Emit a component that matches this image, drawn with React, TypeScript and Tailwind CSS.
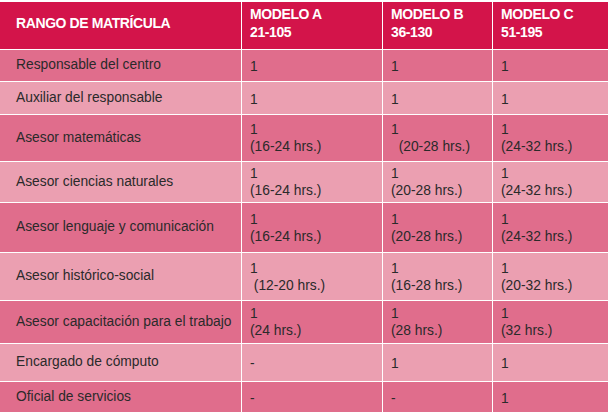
import React from "react";

type Row = { label: string; a: string[]; b: string[]; c: string[]; h: string; dark: boolean };

const NB = "\u00a0";

const rows: Row[] = [
  { label: "Responsable del centro", a: ["1"], b: ["1"], c: ["1"], h: "h-[31px]", dark: true },
  { label: "Auxiliar del responsable", a: ["1"], b: ["1"], c: ["1"], h: "h-[32px]", dark: false },
  { label: "Asesor matemáticas", a: ["1", "(16-24 hrs.)"], b: ["1", NB + NB + "(20-28 hrs.)"], c: ["1", "(24-32 hrs.)"], h: "h-[46px]", dark: true },
  { label: "Asesor ciencias naturales", a: ["1", "(16-24 hrs.)"], b: ["1", "(20-28 hrs.)"], c: ["1", "(24-32 hrs.)"], h: "h-[40px]", dark: false },
  { label: "Asesor lenguaje y comunicación", a: ["1", "(16-24 hrs.)"], b: ["1", "(20-28 hrs.)"], c: ["1", "(24-32 hrs.)"], h: "h-[49px]", dark: true },
  { label: "Asesor histórico-social", a: ["1", NB + "(12-20 hrs.)"], b: ["1", "(16-28 hrs.)"], c: ["1", "(20-32 hrs.)"], h: "h-[47px]", dark: false },
  { label: "Asesor capacitación para el trabajo", a: ["1", "(24 hrs.)"], b: ["1", "(28 hrs.)"], c: ["1", "(32 hrs.)"], h: "h-[42px]", dark: true },
  { label: "Encargado de cómputo", a: ["-"], b: ["1"], c: ["1"], h: "h-[37px]", dark: false },
  { label: "Oficial de servicios", a: ["-"], b: ["-"], c: ["1"], h: "h-[31px]", dark: true },
];

function Cell({ lines, bg }: { lines: string[]; bg: string }) {
  return (
    <div className={`${bg} flex flex-col justify-center pl-2 leading-[17px] whitespace-pre`}>
      {lines.map((l, i) => (
        <span key={i} className={lines.length === 1 ? "pt-[2px]" : ""}>{l}</span>
      ))}
    </div>
  );
}

export default function App() {
  return (
    <div
      className="w-[609px] h-[412px] overflow-hidden bg-white pt-[2px] flex flex-col gap-y-px text-[13.8px] text-[#2a2a2a]"
      style={{ fontFamily: '"Liberation Sans", Arial, sans-serif' }}
    >
      <div className="grid grid-cols-[241px_140px_109px_115px] gap-x-px h-[47px] shrink-0 text-white font-bold text-[14px] tracking-[-0.4px]">
        <div className="bg-[#d3144a] pl-4 pt-[12px] leading-[18px]">RANGO DE MATRÍCULA</div>
        <div className="bg-[#d3144a] pl-2 pt-[3px] leading-[18px]">
          <div>MODELO A</div>
          <div>21-105</div>
        </div>
        <div className="bg-[#d3144a] pl-2 pt-[3px] leading-[18px]">
          <div>MODELO B</div>
          <div>36-130</div>
        </div>
        <div className="bg-[#d3144a] pl-2 pt-[3px] leading-[18px]">
          <div>MODELO C</div>
          <div>51-195</div>
        </div>
      </div>
      {rows.map((r, i) => {
        const bg = r.dark ? "bg-[#e06d8c]" : "bg-[#eb9fb1]";
        return (
          <div key={i} className={`grid grid-cols-[241px_140px_109px_115px] gap-x-px ${r.h} shrink-0`}>
            <div className={`${bg} flex items-center pl-4`}>{r.label}</div>
            <Cell lines={r.a} bg={bg} />
            <Cell lines={r.b} bg={bg} />
            <Cell lines={r.c} bg={bg} />
          </div>
        );
      })}
    </div>
  );
}
